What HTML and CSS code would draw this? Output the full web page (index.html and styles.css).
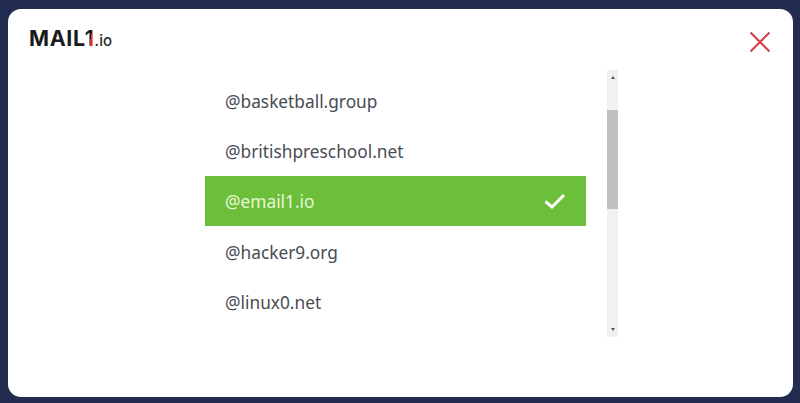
FILE: index.html
```html
<!DOCTYPE html>
<html lang="en">
<head>
<meta charset="utf-8">
<title>Choose domain</title>
<link rel="stylesheet" href="styles.css">
</head>
<body>
<div class="modal">
  <header class="top">
    <div class="logo">MAIL<span class="one">1</span><span class="tld">.io</span></div>
    <svg class="close" width="24" height="24" viewBox="0 0 24 24" aria-label="Close"><path d="M2.500 2.500 21.500 21.500M21.500 2.500 2.500 21.500"/></svg>
  </header>
  <div class="picker">
    <ul class="list">
      <li class="row">@basketball.group</li>
      <li class="row">@britishpreschool.net</li>
      <li class="row active">@email1.io
        <svg class="check" width="22" height="18" viewBox="0 0 22 18"><path d="M1.500 9.500 8 15 20 3"/></svg>
      </li>
      <li class="row">@hacker9.org</li>
      <li class="row">@linux0.net</li>
    </ul>
    <div class="scrollbar">
      <span class="arrow up"></span>
      <div class="thumb"></div>
      <span class="arrow down"></span>
    </div>
  </div>
</div>
</body>
</html>
```
FILE: styles.css
```css
* { box-sizing: border-box; }
html, body { margin: 0; height: 100%; }
body {
  width: 800px;
  height: 403px;
  background: #212c50;
  padding: 9px 7px 6px 8px;
  font-family: "Noto Sans", sans-serif;
  overflow: hidden;
}
.modal {
  height: 388px;
  background: #fff;
  border-radius: 13px;
  padding: 18px 21px 0 20px;
}
.top {
  display: flex;
  justify-content: space-between;
  align-items: flex-start;
  height: 43px;
}
.logo {
  margin-top: -1px;
  margin-left: 1px;
  font-family: "Inter", sans-serif;
  font-weight: 700;
  font-size: 21.500px;
  line-height: 24px;
  letter-spacing: 0.600px;
  color: #1b1b1d;
}
.one {
  background: linear-gradient(100deg, #1b1b1d 55%, #d9342b 55%);
  -webkit-background-clip: text;
  background-clip: text;
  color: transparent;
}
.tld { font-size: 15px; font-weight: 500; letter-spacing: 0; color: #2a2a2d; }
.close { margin-top: 3px; fill: none; stroke: #d8424a; stroke-width: 2.200; }
.picker {
  display: flex;
  align-items: flex-start;
  margin-left: 177px;
}
.list {
  list-style: none;
  margin: 6px 0 0;
  padding: 0;
  width: 381px;
}
.row {
  height: 50px;
  padding: 0 20px;
  display: flex;
  align-items: center;
  justify-content: space-between;
  font-size: 17.300px;
  color: #474c54;
}
.active { background: #6dbf3a; color: #e6f7d8; margin-bottom: 1px; }
.check { fill: none; stroke: #fff; stroke-width: 3; }
.scrollbar {
  margin-left: 21px;
  width: 11px;
  height: 267px;
  background: #f1f1f1;
  display: flex;
  flex-direction: column;
  align-items: center;
  padding-top: 6px;
}
.arrow { width: 0; height: 0; border-left: 2.500px solid transparent; border-right: 2.500px solid transparent; }
.up { border-bottom: 3px solid #555; }
.down { border-top: 3px solid #555; margin-top: 119px; }
.thumb { width: 100%; height: 99px; background: #c1c1c1; margin-top: 31px; }
```
